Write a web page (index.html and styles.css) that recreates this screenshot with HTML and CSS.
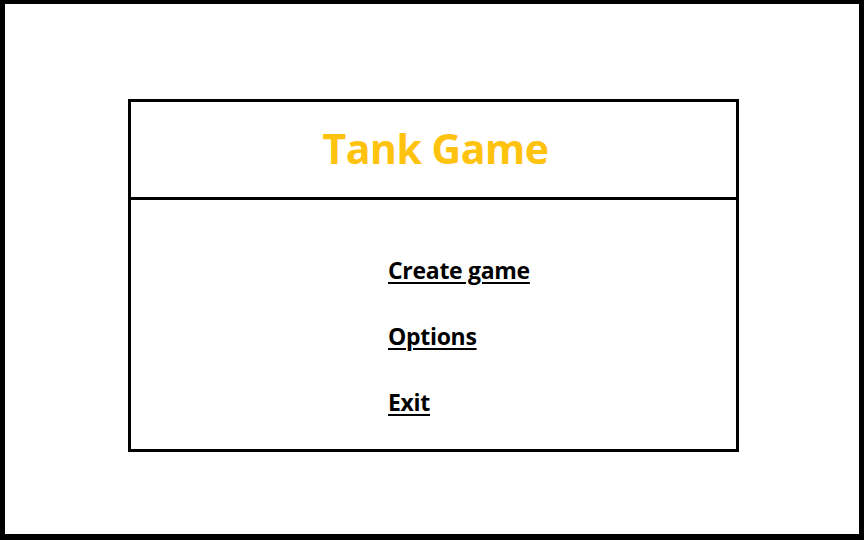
FILE: index.html
```html
<!DOCTYPE html>
<html lang="en">
<head>
  <meta charset="UTF-8">
  <title>Tank Game</title>
  <link rel="stylesheet" href="styles.css">
</head>
<body>
  <!-- Outer window frame -->
  <div class="screen">
    <!-- Main menu panel -->
    <div class="menu-box">
      <div class="title-bar">
        <h1>Tank Game</h1>
      </div>
      <ul class="menu-list">
        <li><a href="#">Create game</a></li>
        <li><a href="#">Options</a></li>
        <li><a href="#">Exit</a></li>
      </ul>
    </div>
  </div>
</body>
</html>
```

FILE: styles.css
```css
/* Basic styling */
body {
  margin: 0;
  font-family: 'Open Sans', 'Noto Sans', sans-serif;
  background: #fff;
}

/* Outer frame */
.screen {
  box-sizing: border-box;
  width: 864px;
  height: 540px;
  border-style: solid;
  border-color: #000;
  border-width: 4px 5px 6px 5px;
  padding: 95px 0 0 123px;
}

/* Menu panel */
.menu-box {
  box-sizing: border-box;
  width: 611px;
  height: 353px;
  border: 3px solid #000;
  display: flex;
  flex-direction: column;
}

/* Title bar */
.title-bar {
  box-sizing: border-box;
  height: 98px;
  padding-bottom: 4px;
  border-bottom: 3px solid #000;
  display: flex;
  justify-content: center;
  align-items: center;
}

.title-bar h1 {
  margin: 0;
  font-size: 41px;
  font-weight: 700;
  color: #ffc20e;
  letter-spacing: -0.5px;
  padding-left: 4px;
}

/* Menu links */
.menu-list {
  list-style-type: none;
  margin: 0;
  padding: 37px 0 0 257px;
}

.menu-list li {
  font-size: 23px;
  line-height: 66px;
}

.menu-list a {
  color: #000;
  font-weight: 700;
  text-decoration: underline;
  text-decoration-thickness: 2px;
  text-underline-offset: 3px;
  letter-spacing: -0.3px;
}
```
